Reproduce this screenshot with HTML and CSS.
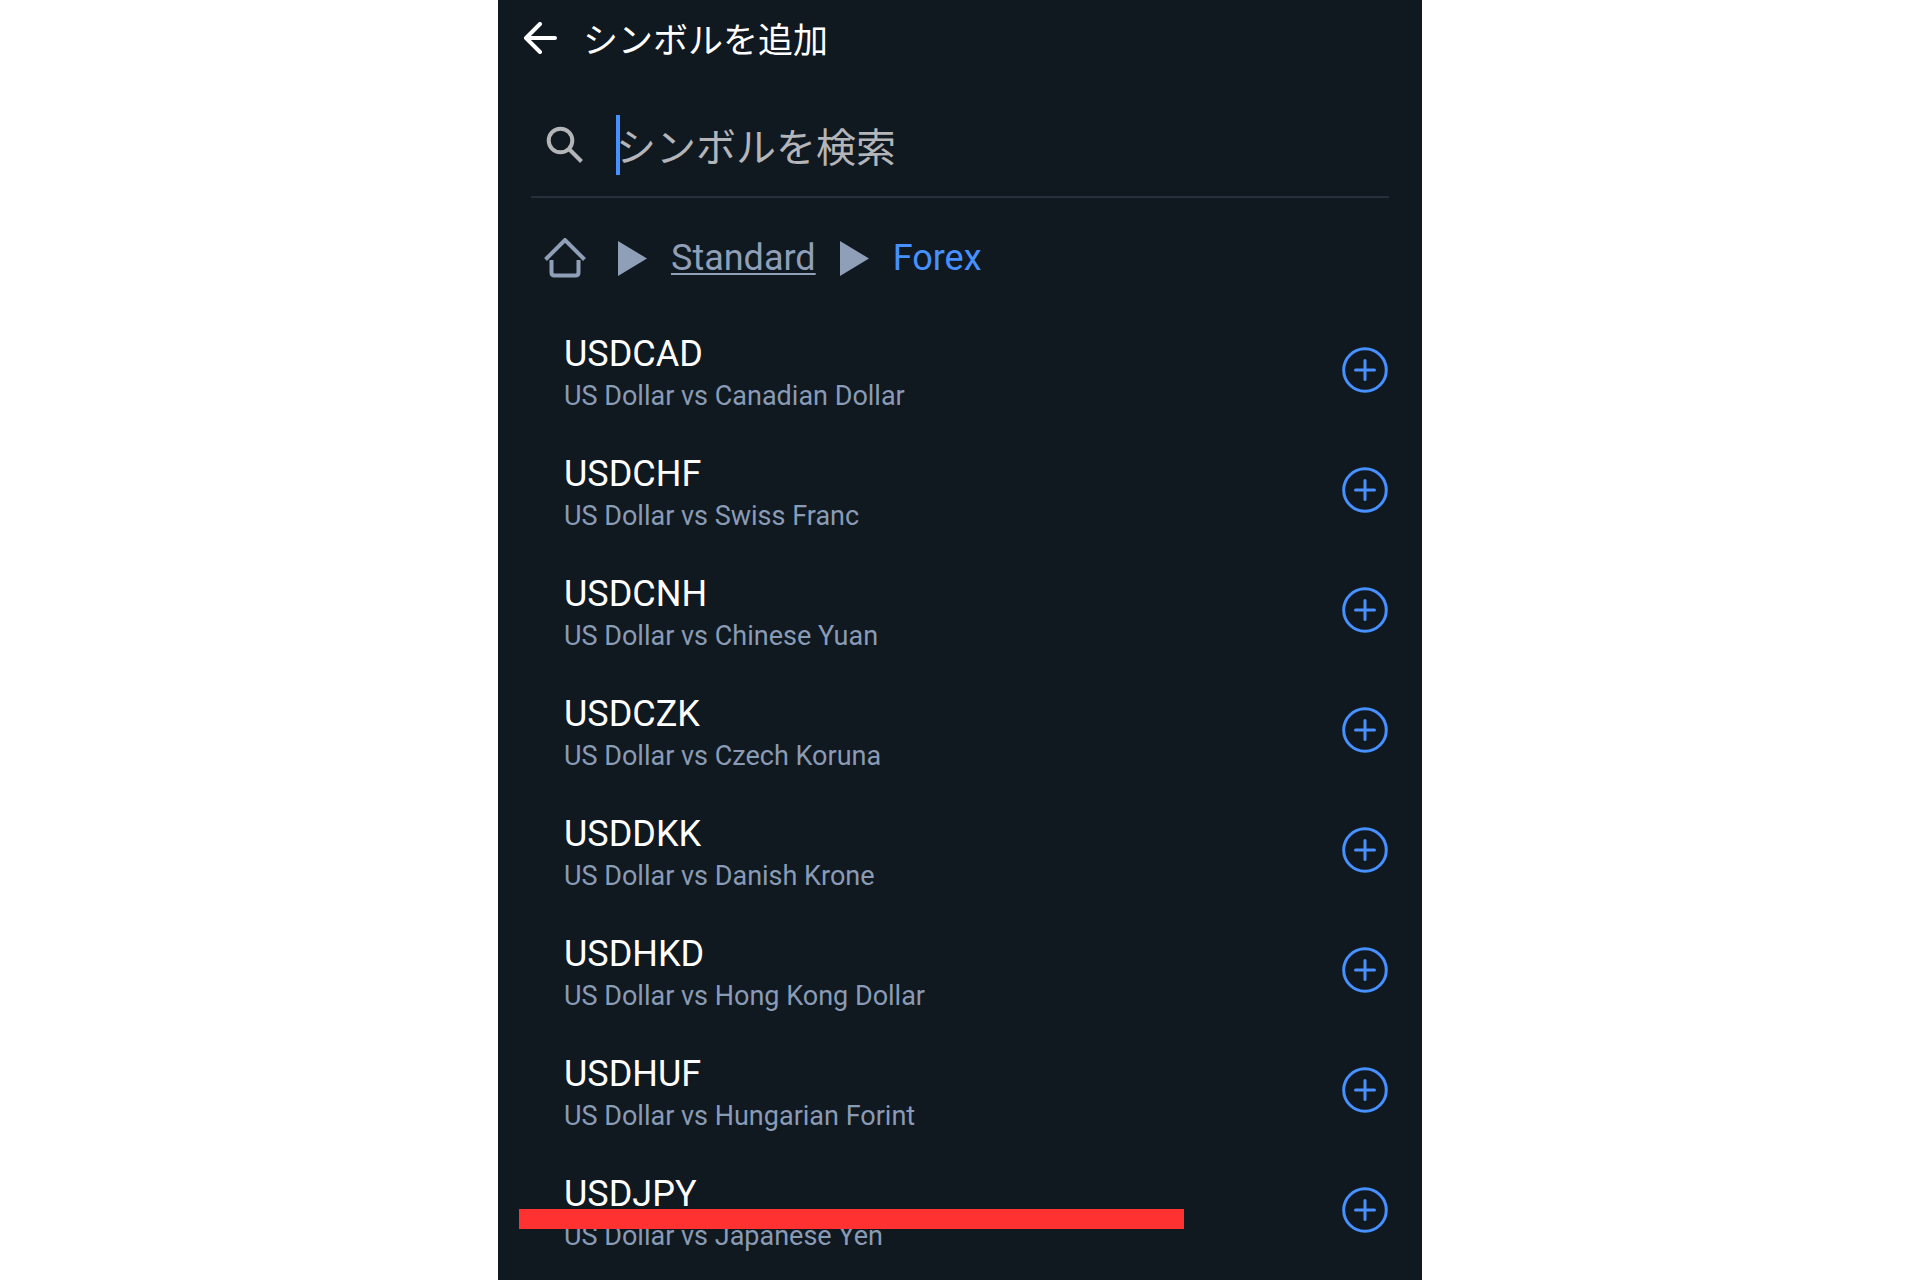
FILE: index.html
```
<!DOCTYPE html>
<html lang="ja">

<head>
    <meta charset="UTF-8">
    <meta name="viewport" content="width=device-width, initial-scale=1.0">
    <title>シンボルを追加</title>
    <link rel="stylesheet" href="styles.css">
</head>

<body>
    <!-- shared plus icon -->
    <svg class="sprite" aria-hidden="true">
        <symbol id="plus" viewBox="0 0 46 46">
            <circle cx="23" cy="23" r="21.3" />
            <path d="M23 13.5v19M13.5 23h19" />
        </symbol>
    </svg>

    <div class="app">
        <header class="top-bar">
            <button class="icon-button" type="button" aria-label="戻る">
                <svg class="back-icon" viewBox="0 0 34 32">
                    <path d="M17 2L3 16l14 14M4 16h28" />
                </svg>
            </button>
            <h1>シンボルを追加</h1>
        </header>

        <main>
            <form class="search">
                <label for="search" aria-label="シンボルを検索">
                    <svg class="search-icon" viewBox="0 0 38 38">
                        <circle cx="14.5" cy="14.5" r="11.8" />
                        <path d="M23.5 23.5l12 12" />
                    </svg>
                </label>
                <div class="search-field">
                    <input type="text" id="search" placeholder="シンボルを検索">
                    <span class="caret"></span>
                </div>
            </form>

            <nav class="breadcrumb">
                <a class="home" href="#" aria-label="ホーム">
                    <svg class="home-icon" viewBox="0 0 42 40">
                        <path d="M1.5 21.5L21 2l19.5 19.5" />
                        <path d="M7.5 22v12.5q0 3 3 3h21q3 0 3-3V22" />
                    </svg>
                </a>
                <svg class="arrow" viewBox="0 0 29 35">
                    <path d="M0 0l29 17.5L0 35z" />
                </svg>
                <a href="#">Standard</a>
                <svg class="arrow" viewBox="0 0 29 35">
                    <path d="M0 0l29 17.5L0 35z" />
                </svg>
                <span class="current">Forex</span>
            </nav>

            <ul class="symbols">
                <li>
                    <div class="symbol">
                        <h2>USDCAD</h2>
                        <p>US Dollar vs Canadian Dollar</p>
                    </div>
                    <button class="icon-button" type="button" aria-label="USDCADを追加"><svg class="plus-icon"><use href="#plus" /></svg></button>
                </li>
                <li>
                    <div class="symbol">
                        <h2>USDCHF</h2>
                        <p>US Dollar vs Swiss Franc</p>
                    </div>
                    <button class="icon-button" type="button" aria-label="USDCHFを追加"><svg class="plus-icon"><use href="#plus" /></svg></button>
                </li>
                <li>
                    <div class="symbol">
                        <h2>USDCNH</h2>
                        <p>US Dollar vs Chinese Yuan</p>
                    </div>
                    <button class="icon-button" type="button" aria-label="USDCNHを追加"><svg class="plus-icon"><use href="#plus" /></svg></button>
                </li>
                <li>
                    <div class="symbol">
                        <h2>USDCZK</h2>
                        <p>US Dollar vs Czech Koruna</p>
                    </div>
                    <button class="icon-button" type="button" aria-label="USDCZKを追加"><svg class="plus-icon"><use href="#plus" /></svg></button>
                </li>
                <li>
                    <div class="symbol">
                        <h2>USDDKK</h2>
                        <p>US Dollar vs Danish Krone</p>
                    </div>
                    <button class="icon-button" type="button" aria-label="USDDKKを追加"><svg class="plus-icon"><use href="#plus" /></svg></button>
                </li>
                <li>
                    <div class="symbol">
                        <h2>USDHKD</h2>
                        <p>US Dollar vs Hong Kong Dollar</p>
                    </div>
                    <button class="icon-button" type="button" aria-label="USDHKDを追加"><svg class="plus-icon"><use href="#plus" /></svg></button>
                </li>
                <li>
                    <div class="symbol">
                        <h2>USDHUF</h2>
                        <p>US Dollar vs Hungarian Forint</p>
                    </div>
                    <button class="icon-button" type="button" aria-label="USDHUFを追加"><svg class="plus-icon"><use href="#plus" /></svg></button>
                </li>
                <li class="marked">
                    <div class="symbol">
                        <h2>USDJPY</h2>
                        <p>US Dollar vs Japanese Yen</p>
                    </div>
                    <button class="icon-button" type="button" aria-label="USDJPYを追加"><svg class="plus-icon"><use href="#plus" /></svg></button>
                </li>
            </ul>
        </main>
    </div>
</body>

</html>
```
FILE: styles.css
```
* {
    box-sizing: border-box;
}

body {
    margin: 0;
    background-color: #ffffff;
    color: #ffffff;
    font-family: Roboto, "Noto Sans CJK JP", sans-serif;
}

h1,
h2,
p,
ul {
    margin: 0;
    padding: 0;
    font-weight: 400;
}

svg {
    display: block;
    fill: none;
    stroke: currentColor;
}

.sprite {
    display: none;
}

.app {
    max-width: 924px;
    min-height: 100vh;
    margin: 0 auto;
    background-color: #101820;
}

.icon-button {
    padding: 0;
    border: none;
    background: none;
    color: inherit;
    cursor: pointer;
}

/* top bar */
.top-bar {
    display: flex;
    align-items: center;
    gap: 26px;
    height: 76px;
    padding: 0 25px;
}

.top-bar h1 {
    font-family: "Noto Sans CJK JP", sans-serif;
    font-size: 35px;
    line-height: 48px;
}

.back-icon {
    width: 34px;
    height: 32px;
    stroke-width: 4;
    stroke-linecap: round;
    stroke-linejoin: round;
}

/* search */
.search {
    display: flex;
    align-items: center;
    gap: 32px;
    margin: 18px 33px 0;
    padding: 0 15px;
    height: 104px;
    border-bottom: 2px solid #262f3c;
}

.search-icon {
    width: 38px;
    height: 38px;
    color: #b4b5b9;
    stroke-width: 4;
}

.search-field {
    position: relative;
    flex: 1;
}

.search-field input {
    display: block;
    width: 100%;
    height: 60px;
    padding: 0;
    border: none;
    outline: none;
    background: none;
    color: #ffffff;
    font-family: "Noto Sans CJK JP", sans-serif;
    font-size: 40px;
}

.search-field input::placeholder {
    color: #b4b5b9;
}

.caret {
    position: absolute;
    top: 0;
    left: 0;
    width: 4px;
    height: 100%;
    background-color: #4690ff;
}

/* breadcrumb */
.breadcrumb {
    display: flex;
    align-items: center;
    gap: 24px;
    height: 112px;
    padding: 8px 46px 0;
    color: #8f9fb7;
    font-size: 36px;
    line-height: 48px;
}

.breadcrumb a {
    color: inherit;
    text-decoration-thickness: 2px;
    text-underline-offset: 3px;
}

.breadcrumb .home {
    margin-right: 8px;
}

.home-icon {
    width: 42px;
    height: 40px;
    stroke-width: 4;
}

.arrow {
    width: 29px;
    height: 35px;
    fill: currentColor;
    stroke: none;
}

.breadcrumb .current {
    color: #4690ff;
}

/* list of symbols */
.symbols {
    list-style: none;
}

.symbols li {
    display: flex;
    align-items: center;
    justify-content: space-between;
    height: 120px;
    padding: 0 34px 0 66px;
}

.symbol {
    padding-top: 4px;
}

.symbol h2 {
    font-size: 36px;
    line-height: 48px;
}

.symbol p {
    color: #8a9bb5;
    font-size: 27px;
    line-height: 37px;
}

.plus-icon {
    width: 46px;
    height: 46px;
    color: #4690ff;
    stroke-width: 3;
    stroke-linecap: round;
}

/* red marker over the last symbol */
.marked {
    position: relative;
}

.marked::after {
    content: "";
    position: absolute;
    top: 59px;
    left: 21px;
    width: 72%;
    height: 20px;
    background-color: #ff3131;
}
```
